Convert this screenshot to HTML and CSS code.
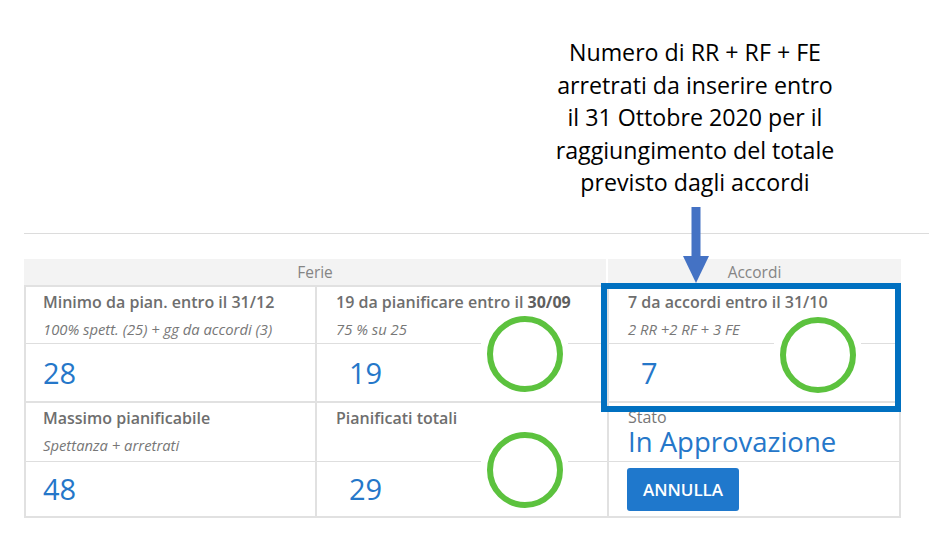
FILE: index.html
```html
<!DOCTYPE html>
<html lang="it">
<head>
<meta charset="utf-8">
<title>Ferie e Accordi</title>
<link rel="stylesheet" href="styles.css">
</head>
<body>
<div class="page">
  <div class="note">
    <p>Numero di RR + RF + FE</p>
    <p>arretrati da inserire entro</p>
    <p>il 31 Ottobre 2020 per il</p>
    <p>raggiungimento del totale</p>
    <p>previsto dagli accordi</p>
  </div>
  <div class="rule"></div>

  <div class="board">
    <div class="heads">
      <div class="head head-ferie">Ferie</div>
      <div class="head head-accordi">Accordi</div>
    </div>
    <div class="grid">
      <div class="cell">
        <div class="top">
          <div class="label">Minimo da pian. entro il 31/12</div>
          <div class="sub">100% spett. (25) + gg da accordi (3)</div>
        </div>
        <div class="bottom"><span class="value">28</span></div>
      </div>
      <div class="cell cell-in">
        <div class="top">
          <div class="label">19 da pianificare entro il <b>30/09</b></div>
          <div class="sub">75 % su 25</div>
        </div>
        <div class="bottom"><span class="value">19</span></div>
      </div>
      <div class="cell cell-in">
        <div class="top">
          <div class="label">7 da accordi entro il 31/10</div>
          <div class="sub">2 RR +2 RF + 3 FE</div>
        </div>
        <div class="bottom"><span class="value">7</span></div>
      </div>

      <div class="cell row2">
        <div class="top">
          <div class="label">Massimo pianificabile</div>
          <div class="sub">Spettanza + arretrati</div>
        </div>
        <div class="bottom"><span class="value">48</span></div>
      </div>
      <div class="cell cell-in row2">
        <div class="top">
          <div class="label">Pianificati totali</div>
        </div>
        <div class="bottom"><span class="value">29</span></div>
      </div>
      <div class="cell cell-in row2">
        <div class="top top-stato">
          <div class="label">Stato</div>
          <div class="status">In Approvazione</div>
        </div>
        <div class="bottom bottom-btn"><button class="btn">ANNULLA</button></div>
      </div>
    </div>
  </div>

  <svg class="arrow" width="26" height="76" viewBox="0 0 26 76">
    <rect x="8.5" y="0" width="9" height="50" fill="#4472c4"/>
    <polygon points="0,49 26,49 13,76" fill="#4472c4"/>
  </svg>
  <div class="highlight"></div>
  <svg class="ring ring-1" width="87" height="82" viewBox="0 0 87 82">
    <rect width="87" height="82" fill="#fff"/>
    <circle cx="44" cy="41" r="35" fill="none" stroke="#5cc23e" stroke-width="6"/>
  </svg>
  <svg class="ring ring-2" width="87" height="82" viewBox="0 0 87 82">
    <rect width="87" height="82" fill="#fff"/>
    <circle cx="44" cy="41" r="35" fill="none" stroke="#5cc23e" stroke-width="6"/>
  </svg>
  <svg class="ring ring-3" width="87" height="82" viewBox="0 0 87 82">
    <rect width="87" height="82" fill="#fff"/>
    <circle cx="44" cy="41" r="35" fill="none" stroke="#5cc23e" stroke-width="6"/>
  </svg>
</div>
</body>
</html>
```
FILE: styles.css
```css
html, body {
  margin: 0;
  padding: 0;
  background: #fff;
}
.page {
  position: relative;
  width: 929px;
  height: 546px;
  overflow: hidden;
  font-family: "Open Sans", "DejaVu Sans", sans-serif;
}
.note {
  margin-left: 495px;
  width: 400px;
  padding-top: 36px;
  font-family: "Open Sans", "DejaVu Sans", sans-serif;
  font-size: 23.2px;
  line-height: 32.5px;
  color: #000;
  text-align: center;
}
.note p {
  margin: 0;
}
.rule {
  margin: 34.5px 0 0 24px;
  height: 1px;
  background: #dcdcdc;
}
.board {
  margin: 25px 0 0 24px;
  width: 877px;
}
.heads {
  display: flex;
  gap: 2px;
  height: 26px;
}
.head {
  background: #f3f3f3;
  color: #858585;
  font-size: 15.5px;
  line-height: 26px;
  text-align: center;
}
.head-ferie {
  width: 582px;
}
.head-accordi {
  flex: 1;
}
.grid {
  display: grid;
  grid-template-columns: 289px 290px 290px;
  gap: 2px;
  padding: 2px;
  background: #e1e1e1;
}
.cell {
  background: #fff;
  display: flex;
  flex-direction: column;
}
.top {
  height: 57px;
  box-sizing: border-box;
  padding: 5px 8px 0 17px;
  border-bottom: 1px solid #dedede;
}
.row2 .top {
  height: 59px;
}
.label {
  font-size: 16px;
  font-weight: 600;
  color: #6e6e6e;
  line-height: 20px;
  white-space: nowrap;
}
.label b {
  font-weight: 700;
  color: #5f5f5f;
}
.sub {
  margin-top: 8px;
  font-size: 14.8px;
  font-style: italic;
  color: #777;
  line-height: 18px;
  white-space: nowrap;
}
.bottom {
  height: 57px;
  display: flex;
  align-items: center;
  padding-left: 17px;
}
.row2 .bottom {
  height: 54px;
}
.value {
  font-size: 29px;
  color: #2577c9;
  line-height: 32px;
}
.cell-in .top {
  padding-left: 19px;
}
.cell-in .bottom {
  padding-left: 32px;
}
.top-stato .label {
  font-weight: 400;
  color: #777;
  line-height: 18px;
}
.status {
  margin-top: 2px;
  font-size: 27.5px;
  color: #2577c9;
  line-height: 28px;
  white-space: nowrap;
}
.cell-in .bottom-btn {
  padding-left: 18px;
}
.btn {
  width: 112px;
  height: 43px;
  border: none;
  border-radius: 3px;
  background: #1f78cc;
  color: #fff;
  font-family: "Open Sans", "DejaVu Sans", sans-serif;
  font-size: 17px;
  font-weight: 600;
  padding: 0;
}
.arrow {
  position: absolute;
  left: 683px;
  top: 207px;
}
.highlight {
  position: absolute;
  left: 601px;
  top: 283px;
  width: 300px;
  height: 129px;
  box-sizing: border-box;
  border: 6px solid #0070c0;
}
.ring {
  position: absolute;
}
.ring-1 {
  left: 481px;
  top: 313px;
}
.ring-2 {
  left: 774px;
  top: 314px;
}
.ring-3 {
  left: 481px;
  top: 429px;
}
```
